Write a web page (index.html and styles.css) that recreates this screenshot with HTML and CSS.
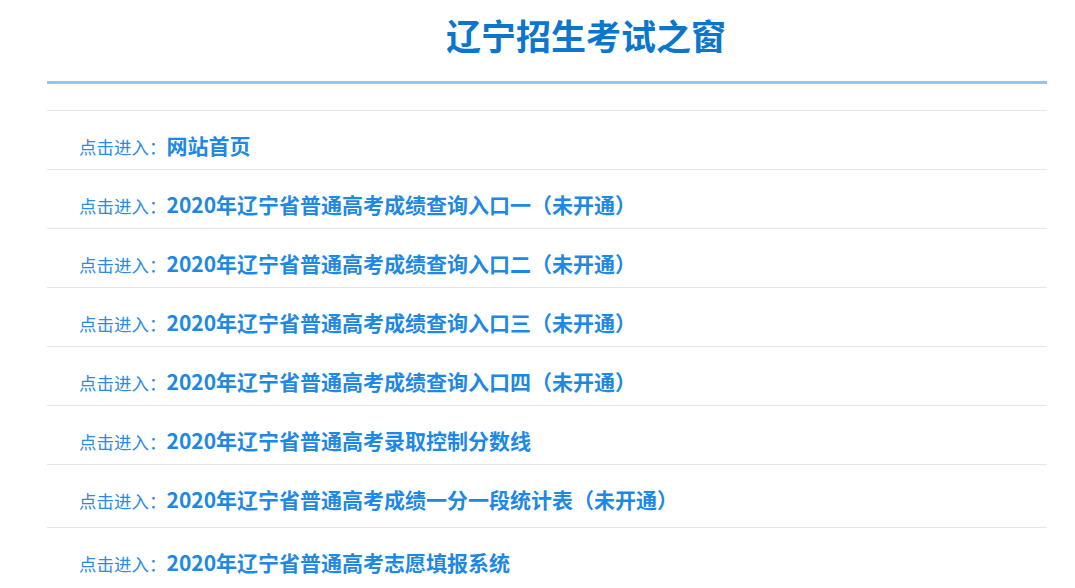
FILE: index.html
```html
<!DOCTYPE html>
<html lang="zh-CN">
<head>
    <meta charset="UTF-8">
    <meta name="viewport" content="width=device-width, initial-scale=1.0">
    <title>辽宁招生考试之窗</title>
    <link rel="stylesheet" href="styles.css">
</head>

<body>
    <div class="wrap">
        <!-- Page title -->
        <h1 class="title">辽宁招生考试之窗</h1>

        <!-- Link list -->
        <ul class="entry-list">
            <li class="entry"><span class="entry-label">点击进入：</span><a class="entry-link" href="#">网站首页</a></li>
            <li class="entry"><span class="entry-label">点击进入：</span><a class="entry-link" href="#">2020年辽宁省普通高考成绩查询入口一（未开通）</a></li>
            <li class="entry"><span class="entry-label">点击进入：</span><a class="entry-link" href="#">2020年辽宁省普通高考成绩查询入口二（未开通）</a></li>
            <li class="entry"><span class="entry-label">点击进入：</span><a class="entry-link" href="#">2020年辽宁省普通高考成绩查询入口三（未开通）</a></li>
            <li class="entry"><span class="entry-label">点击进入：</span><a class="entry-link" href="#">2020年辽宁省普通高考成绩查询入口四（未开通）</a></li>
            <li class="entry"><span class="entry-label">点击进入：</span><a class="entry-link" href="#">2020年辽宁省普通高考录取控制分数线</a></li>
            <li class="entry entry-tall"><span class="entry-label">点击进入：</span><a class="entry-link" href="#">2020年辽宁省普通高考成绩一分一段统计表（未开通）</a></li>
            <li class="entry"><span class="entry-label">点击进入：</span><a class="entry-link" href="#">2020年辽宁省普通高考志愿填报系统</a></li>
        </ul>
    </div>
</body>
</html>
```

FILE: styles.css
```css
/*
==========
= Page   =
==========
*/
body {
    margin: 0;
    background: #fff;
    font-family: "Noto Sans CJK SC", "Liberation Sans", sans-serif;
}

.wrap {
    width: 1000px;
    margin-left: 47px;
}

/*
==========
= Title  =
==========
*/
.title {
    margin: 0;
    padding: 10px 0 21px 78px;
    line-height: 50px;
    font-size: 35px;
    font-weight: bold;
    text-align: center;
    color: #0a77cc;
    border-bottom: 3px solid #92c6ec;
}

/*
==============
= Entry list =
==============
*/
.entry-list {
    list-style: none;
    margin: 26px 0 0;
    padding: 0;
}

.entry {
    height: 30px;
    border-top: 1px solid #e6e6e6;
    padding: 19px 0 9px 32px;
    line-height: 30px;
}

.entry-tall {
    padding-bottom: 13px;
}

.entry-label {
    font-size: 17.5px;
    color: #2b8be2;
}

.entry-link {
    font-size: 21px;
    font-weight: bold;
    color: #1e88e5;
    text-decoration: none;
}
```
